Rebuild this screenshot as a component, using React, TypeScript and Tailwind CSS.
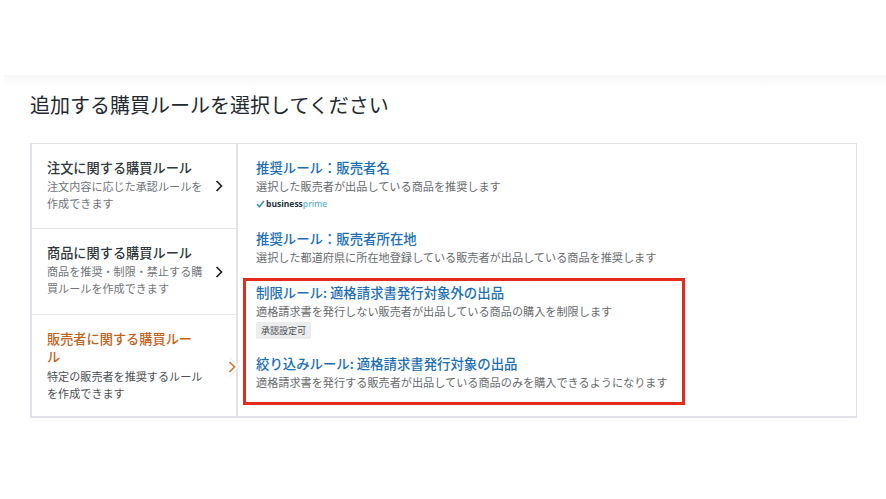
const font = { fontFamily: '"Noto Sans CJK JP", "Liberation Sans", sans-serif' };

const categories = [
  { title: '注文に関する購買ルール', desc: '注文内容に応じた承認ルールを作成できます', h: 'h-[85px]', arrow: 'top-[36px]' },
  { title: '商品に関する購買ルール', desc: '商品を推奨・制限・禁止する購買ルールを作成できます', h: 'h-[86px]', arrow: 'top-[37px]' },
];

const Chevron = ({ className }: { className: string }) => (
  <svg width="8" height="12" viewBox="0 0 8 12" className={className}>
    <path d="M1.5 1 L6.5 6 L1.5 11" fill="none" stroke="currentColor" strokeWidth="1.7" />
  </svg>
);

const Rule = ({ title, desc, className }: { title: string; desc: string; className: string }) => (
  <div className={className}>
    <div className="text-[13.4px] leading-[18px] font-medium text-[#1c6fb5]">{title}</div>
    <div className="text-[11.15px] leading-[16px] text-[#666c70] mt-[2px] whitespace-nowrap">{desc}</div>
  </div>
);

export default function App() {
  return (
    <div className="w-[886px] h-[499px] bg-white overflow-hidden" style={font}>
      <div className="h-[75px]" />
      <div className="ml-[4px] h-[12px] bg-gradient-to-b from-[#f6f6f6] to-white" />
      <div className="pl-[30px]">
        <h1 className="text-[20px] leading-[28px] font-normal text-[#1f2a30] mt-[4px]">
          追加する購買ルールを選択してください
        </h1>

        <div className="relative mt-[24px] w-[827px] h-[275px] flex border border-l-2 border-b-2 border-[#dfe2e6]">
          {/* 左カラム */}
          <div className="w-[206px] flex flex-col border-r-2 border-[#e1e3e6]">
            {categories.map((c) => (
              <div key={c.title} className={`${c.h} relative border-b border-[#e6e7e9] pl-[15px] pr-[30px] pt-[14px]`}>
                <div className="text-[13.2px] leading-[20px] font-medium text-[#30383d]">{c.title}</div>
                <div className="text-[11.1px] leading-[17px] text-[#6f7579]">{c.desc}</div>
                <Chevron className={`absolute right-[13px] ${c.arrow} text-[#222]`} />
              </div>
            ))}
            <div className="flex-1 relative pl-[15px] pr-[30px] pt-[15px]">
              <div className="max-w-[150px] text-[13.2px] leading-[18px] font-medium text-[#c4621c]">販売者に関する購買ルール</div>
              <div className="text-[11.1px] leading-[17px] text-[#4a5156] mt-[2px]">特定の販売者を推奨するルールを作成できます</div>
              <div className="absolute right-[-1px] top-[45px] w-[14px] h-[14px] rotate-45 bg-white border-t border-r border-[#e8eaec]" />
              <Chevron className="absolute right-[0px] top-[46px] text-[#d2772f]" />
            </div>
          </div>

          {/* 右カラム */}
          <div className="flex-1 pl-[18px]">
            <Rule className="pt-[14px]" title="推奨ルール：販売者名" desc="選択した販売者が出品している商品を推奨します" />
            <div className="flex items-center h-[14px] mt-[3px] text-[8.5px] font-bold leading-none" style={{ fontFamily: '"Open Sans", sans-serif' }}>
              <svg width="9" height="8" viewBox="0 0 9 8" className="mr-[1px]">
                <path d="M1 4.2 L3.4 6.8 L8 1" fill="none" stroke="#3a8fa8" strokeWidth="1.5" />
              </svg>
              <span className="text-[#22323c]">business</span>
              <span className="text-[#6bb6c9] font-semibold">prime</span>
            </div>
            <Rule className="mt-[18px]" title="推奨ルール：販売者所在地" desc="選択した都道府県に所在地登録している販売者が出品している商品を推奨します" />
            <Rule className="mt-[18px]" title="制限ルール: 適格請求書発行対象外の出品" desc="適格請求書を発行しない販売者が出品している商品の購入を制限します" />
            <div className="mt-[3px] w-[55px] h-[17px] rounded-[2px] bg-[#eceded] text-[9px] leading-[17px] text-center text-[#4b5256]">承認設定可</div>
            <Rule className="mt-[15px]" title="絞り込みルール: 適格請求書発行対象の出品" desc="適格請求書を発行する販売者が出品している商品のみを購入できるようになります" />
          </div>

          {/* 赤枠 */}
          <div className="absolute left-[211px] top-[134px] w-[442px] h-[127px] border-[3px] border-[#e32b1e]" />
        </div>
      </div>
    </div>
  );
}
